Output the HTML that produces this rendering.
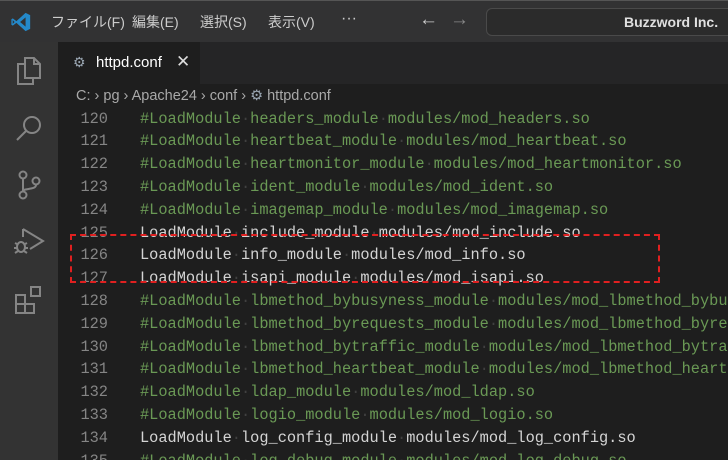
<!DOCTYPE html>
<html><head><meta charset="utf-8"><style>
*{margin:0;padding:0;box-sizing:border-box}
html,body{width:728px;height:460px;overflow:hidden}
body{background:#1e1e1e;font-family:"Liberation Sans","Noto Sans CJK JP",sans-serif;position:relative}
#title{position:absolute;left:0;top:0;width:728px;height:42px;background:#323233;border-top:1px solid #555}
.menu{position:absolute;top:11px;color:#cccccc;font-size:14px}
#act{position:absolute;left:0;top:42px;width:58px;height:418px;background:#333333}
#tabs{position:absolute;left:58px;top:42px;width:670px;height:42px;background:#252526}
#tab{position:absolute;left:0;top:0;width:142px;height:42px;background:#1e1e1e}
#crumb{position:absolute;left:58px;top:84px;width:670px;height:26px;background:#1e1e1e;color:#a9a9a9;font-size:14.5px}
#code{position:absolute;left:58px;top:107.6px;width:670px;height:360px;overflow:hidden;font-family:"Liberation Mono",monospace;font-size:15.3px}
.l{height:22.8px;line-height:22.8px;position:relative;white-space:pre}
.n{position:absolute;left:0;width:50px;text-align:right;color:#858585}
.t{position:absolute;left:82px;color:#d4d4d4}
.c{color:#6a9955}
.d{color:#404040}
#box{position:absolute;left:70px;top:234px;width:590px;height:49px;border:2px dashed #e02020}
</style></head><body>
<div id="title">
<svg style="position:absolute;left:10px;top:10px" width="22" height="22" viewBox="0 0 24 24"><path d="M17 2 L22 4.5 V19.5 L17 22 L7 13 L3 16 L1.5 15 V9 L3 8 L7 11 Z M17 7 L11 12 L17 17 Z M3 10 V14 L5 12 Z" fill="#2489ca"/></svg>
<span class="menu" style="left:51px">ファイル(F)</span>
<span class="menu" style="left:132px">編集(E)</span>
<span class="menu" style="left:200px">選択(S)</span>
<span class="menu" style="left:268px">表示(V)</span>
<span class="menu" style="left:341px;top:9px;font-size:16px">···</span>
<span style="position:absolute;left:419px;top:8px;color:#ccc;font-size:19px">←</span>
<span style="position:absolute;left:450px;top:8px;color:#888;font-size:19px">→</span>
<div style="position:absolute;left:486px;top:7px;width:250px;height:28px;border:1px solid #4a4a4a;border-radius:6px;background:#2b2b2b"></div>
<span style="position:absolute;left:624px;top:13px;color:#e0e0e0;font-size:14px;font-weight:bold">Buzzword Inc.</span>
</div>
<div id="act">
<svg style="position:absolute;left:15px;top:14px" width="28" height="30" viewBox="0 0 28 30" fill="none" stroke="#858585" stroke-width="2"><path d="M10 2 H19 L25 8 V22 H10 Z M19 2 V8 H25"/><path d="M10 8 H3 V28 H18 V22"/></svg>
<svg style="position:absolute;left:15px;top:72px" width="28" height="28" viewBox="0 0 28 28" fill="none" stroke="#858585" stroke-width="2"><circle cx="17" cy="11" r="8"/><path d="M11 17 L2 26"/></svg>
<svg style="position:absolute;left:16px;top:128px" width="26" height="30" viewBox="0 0 26 30" fill="none" stroke="#858585" stroke-width="2"><circle cx="7" cy="5" r="3.5"/><circle cx="7" cy="25" r="3.5"/><circle cx="20" cy="11" r="3.5"/><path d="M7 9 V21 M20 15 C20 20 8 18 7 21"/></svg>
<svg style="position:absolute;left:12px;top:185px" width="34" height="30" viewBox="0 0 34 30" fill="none" stroke="#858585" stroke-width="2"><path d="M11 2 L31 14 L18 22 M11 2 V10"/><ellipse cx="9" cy="20" rx="4" ry="5"/><path d="M3 16 L5 17 M15 16 L13 17 M2 21 H5 M13 21 H16 M3 26 L6 24 M15 26 L12 24"/></svg>
<svg style="position:absolute;left:14px;top:243px" width="30" height="30" viewBox="0 0 30 30" fill="none" stroke="#858585" stroke-width="2"><path d="M2 10 H11 V28 H2 Z M2 19 H20 V28 H11"/><rect x="17" y="2" width="9" height="9"/></svg>
</div>
<div id="tabs"><div id="tab">
<span style="position:absolute;left:15px;top:12px;color:#9aa6b2;font-size:14px">⚙</span>
<span style="position:absolute;left:38px;top:12px;color:#fff;font-size:15px">httpd.conf</span>
<span style="position:absolute;left:118px;top:10px;color:#ddd;font-size:17px">✕</span>
</div></div>
<div id="crumb"><span style="position:absolute;left:18px;top:4px">C: › pg › Apache24 › conf › <span style="color:#9aa6b2">⚙</span> httpd.conf</span></div>
<div id="code"><div class="l"><span class="n">120</span><span class="t c">#LoadModule<span class="d">·</span>headers_module<span class="d">·</span>modules/mod_headers.so</span></div><div class="l"><span class="n">121</span><span class="t c">#LoadModule<span class="d">·</span>heartbeat_module<span class="d">·</span>modules/mod_heartbeat.so</span></div><div class="l"><span class="n">122</span><span class="t c">#LoadModule<span class="d">·</span>heartmonitor_module<span class="d">·</span>modules/mod_heartmonitor.so</span></div><div class="l"><span class="n">123</span><span class="t c">#LoadModule<span class="d">·</span>ident_module<span class="d">·</span>modules/mod_ident.so</span></div><div class="l"><span class="n">124</span><span class="t c">#LoadModule<span class="d">·</span>imagemap_module<span class="d">·</span>modules/mod_imagemap.so</span></div><div class="l"><span class="n">125</span><span class="t">LoadModule<span class="d">·</span>include_module<span class="d">·</span>modules/mod_include.so</span></div><div class="l"><span class="n">126</span><span class="t">LoadModule<span class="d">·</span>info_module<span class="d">·</span>modules/mod_info.so</span></div><div class="l"><span class="n">127</span><span class="t">LoadModule<span class="d">·</span>isapi_module<span class="d">·</span>modules/mod_isapi.so</span></div><div class="l"><span class="n">128</span><span class="t c">#LoadModule<span class="d">·</span>lbmethod_bybusyness_module<span class="d">·</span>modules/mod_lbmethod_bybusyness.so</span></div><div class="l"><span class="n">129</span><span class="t c">#LoadModule<span class="d">·</span>lbmethod_byrequests_module<span class="d">·</span>modules/mod_lbmethod_byrequests.so</span></div><div class="l"><span class="n">130</span><span class="t c">#LoadModule<span class="d">·</span>lbmethod_bytraffic_module<span class="d">·</span>modules/mod_lbmethod_bytraffic.so</span></div><div class="l"><span class="n">131</span><span class="t c">#LoadModule<span class="d">·</span>lbmethod_heartbeat_module<span class="d">·</span>modules/mod_lbmethod_heartbeat.so</span></div><div class="l"><span class="n">132</span><span class="t c">#LoadModule<span class="d">·</span>ldap_module<span class="d">·</span>modules/mod_ldap.so</span></div><div class="l"><span class="n">133</span><span class="t c">#LoadModule<span class="d">·</span>logio_module<span class="d">·</span>modules/mod_logio.so</span></div><div class="l"><span class="n">134</span><span class="t">LoadModule<span class="d">·</span>log_config_module<span class="d">·</span>modules/mod_log_config.so</span></div><div class="l"><span class="n">135</span><span class="t c">#LoadModule<span class="d">·</span>log_debug_module<span class="d">·</span>modules/mod_log_debug.so</span></div></div>
<div id="box"></div>
</body></html>
